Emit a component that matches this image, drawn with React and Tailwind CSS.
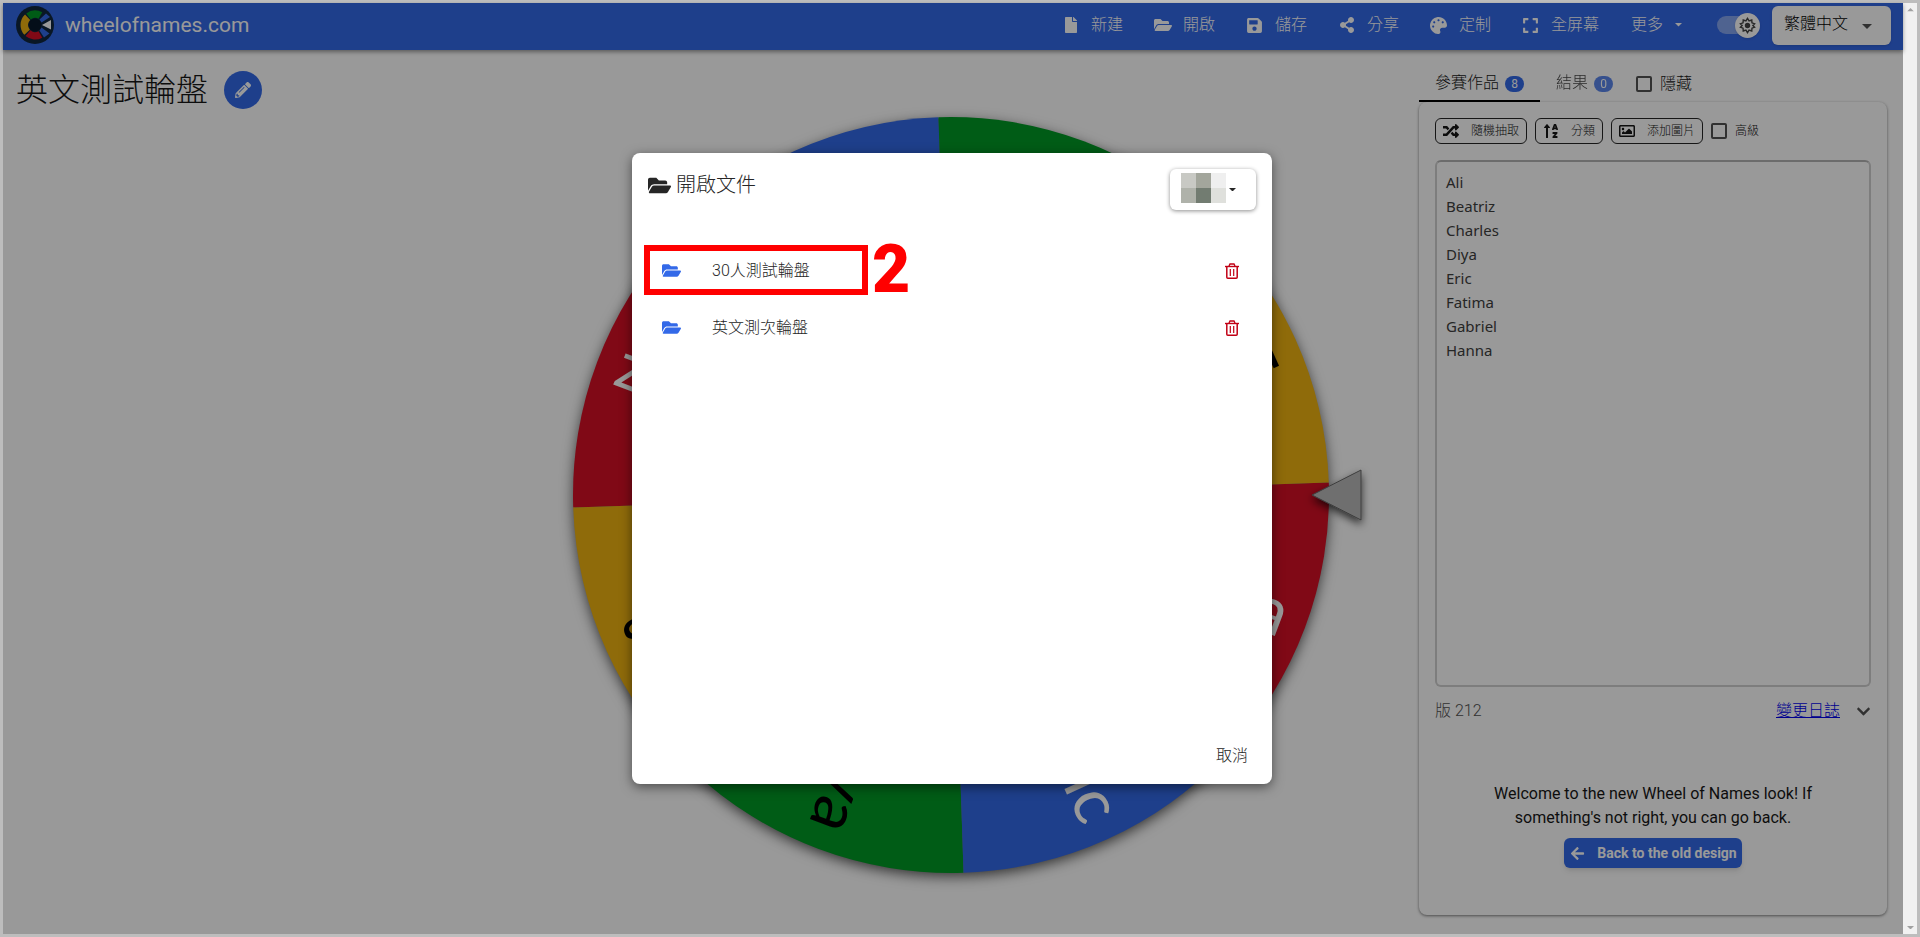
import React, { useState } from 'react';
import {
  FaFile,
  FaFolderOpen,
  FaSave,
  FaShareAlt,
  FaPalette,
  FaExpand,
  FaPencilAlt,
  FaRandom,
  FaSortAlphaUp,
  FaRegImage,
  FaArrowLeft,
  FaChevronDown,
} from 'react-icons/fa';

const NAMES = ['Ali', 'Beatriz', 'Charles', 'Diya', 'Eric', 'Fatima', 'Gabriel', 'Hanna'];

const SLICE_COLORS = [
  { fill: '#3369E8', text: '#ffffff' },
  { fill: '#D50F25', text: '#ffffff' },
  { fill: '#EEB211', text: '#000000' },
  { fill: '#009925', text: '#000000' },
];

const MENU = [
  { label: '新建', icon: <FaFile size={16} className="shrink-0" /> },
  { label: '開啟', icon: <FaFolderOpen size={18} className="shrink-0" /> },
  { label: '儲存', icon: <FaSave size={17} className="shrink-0" /> },
  { label: '分享', icon: <FaShareAlt size={16} className="shrink-0" /> },
  { label: '定制', icon: <FaPalette size={17} className="shrink-0" /> },
  { label: '全屏幕', icon: <FaExpand size={17} className="shrink-0" /> },
];

const FILES = ['30人測試輪盤', '英文測次輪盤'];

const MOSAIC = ['#c8c9c4', '#a3a69c', '#efefef', '#afb2aa', '#727c71', '#dfe0dc'];

const Caret = ({ className }) => (
  <svg viewBox="0 0 10 5" className={className} fill="currentColor" aria-hidden="true">
    <path d="M0 0h10L5 5z" />
  </svg>
);

const Logo = () => (
  <svg viewBox="-19 -19 38 38" className="w-[38px] h-[38px] shrink-0" aria-hidden="true">
    <circle r="19" fill="#10273f" />
    <g fill="none" strokeWidth="7.5">
      <path d="M-6.5-8.6A10.8 10.8 0 0 1 5.4-9.4" stroke="#009925" />
      <path d="M-7.9 7.3A10.8 10.8 0 0 1-7.4-7.8" stroke="#EEB211" />
      <path d="M5.4 9.4A10.8 10.8 0 0 1-7 8.2" stroke="#D50F25" />
    </g>
    <path d="M4.5-5.5 11-11.5l4 3.5-8.5 5.5zM4.5 5.5 9 12.5l5.500-4L6.500 2.500z" fill="#3369E8" />
    <circle r="6.4" fill="#08182a" />
    <path d="M7 0l9-5v9.500z" fill="#fff" />
  </svg>
);

const Sun = () => (
  <svg viewBox="0 0 24 24" className="w-[17px] h-[17px]" fill="none" stroke="#444" aria-hidden="true">
    <path
      d="M12 2l2.2 3.6L18 4.2l.3 4L22 9.500 19.600 12l2.400 2.500-3.700 1.300-.3 4-3.800-1.400L12 22l-2.200-3.600L6 19.800l-.3-4L2 14.500 4.400 12 2 9.500l3.700-1.300.3-4 3.800 1.400z"
      strokeWidth="2"
    />
    <circle cx="12" cy="12" r="2.6" strokeWidth="2.4" fill="#444" />
  </svg>
);

const Trash = () => (
  <svg viewBox="0 0 14 16" className="w-[14px] h-4" fill="none" stroke="#c10015" aria-hidden="true">
    <path d="M0 3.500h14" strokeWidth="1.4" />
    <path d="M4 3l1-2h4l1 2" strokeWidth="1.4" />
    <path d="M1.8 4v10.200q0 1 1 1h8.400q1 0 1-1V4" strokeWidth="1.5" />
    <path d="M5.300 6v7M8.700 6v7" strokeWidth="1.2" />
  </svg>
);

const rim = (deg, r) => {
  const a = (deg * Math.PI) / 180;
  return `${(r * Math.cos(a)).toFixed(2)} ${(r * Math.sin(a)).toFixed(2)}`;
};

const Wheel = () => {
  const step = 360 / NAMES.length;
  // Angles grow clockwise from the pointer; entries run the other way round
  const first = 245.6;

  return (
    <svg
      viewBox="-420 -400 840 800"
      className="w-[840px] max-w-full overflow-visible"
      role="img"
      aria-label="輪盤"
    >
      <defs>
        <filter id="wheelShadow" x="-20%" y="-20%" width="140%" height="140%">
          <feDropShadow dx="0" dy="4" stdDeviation="7" floodOpacity="0.7" />
        </filter>
        <filter id="pointerShadow" x="-50%" y="-50%" width="200%" height="200%">
          <feDropShadow dx="0" dy="4" stdDeviation="4" floodOpacity="0.7" />
        </filter>
      </defs>
      <circle r="377" fill="#777" filter="url(#wheelShadow)" />
      {NAMES.map((name, i) => {
        const mid = first - i * step;
        const color = SLICE_COLORS[i % SLICE_COLORS.length];
        return (
          <g key={name}>
            <path
              d={`M0 0L${rim(mid - step / 2, 378)}A378 378 0 0 1 ${rim(mid + step / 2, 378)}Z`}
              fill={color.fill}
            />
            <text
              x="357"
              y="18"
              textAnchor="end"
              transform={`rotate(${mid})`}
              fill={color.text}
              className="font-['Lato'] text-[66px]"
            >
              {name}
            </text>
          </g>
        );
      })}
      <path d="M361 0L410-25V25Z" fill="#b9b9b9" stroke="#666" filter="url(#pointerShadow)" />
    </svg>
  );
};

const Header = () => {
  const [light, setLight] = useState(true);

  return (
    <header className="h-[47px] shrink-0 bg-[#3369E8] text-white shadow-[0_2px_4px_rgba(0,0,0,0.4)] flex items-center justify-between pl-[13px] pr-3 pb-[3px]">
      <div className="flex items-center gap-[11px]">
        <Logo />
        <span className="text-[21px] leading-7">wheelofnames.com</span>
      </div>

      <nav className="flex items-center font-light">
        {MENU.map((item) => (
          <button key={item.label} type="button" className="flex items-center gap-3 px-4">
            <span className="w-4 flex justify-center">{item.icon}</span>
            {item.label}
          </button>
        ))}
        <button type="button" className="flex items-center gap-3 px-4">
          更多
          <Caret className="w-[7px]" />
        </button>

        {/* Light / dark switch */}
        <label className="relative ml-[19px] mr-3 w-[43px] h-[25px] flex items-center">
          <input
            type="checkbox"
            aria-label="主題"
            checked={light}
            onChange={(e) => setLight(e.target.checked)}
            className="appearance-none w-9 h-[18px] rounded-full bg-white/40"
          />
          <span className="absolute right-0 w-[25px] h-[25px] rounded-full bg-white shadow flex items-center justify-center">
            <Sun />
          </span>
        </label>

        <div className="relative text-black">
          <select
            aria-label="語言"
            className="appearance-none w-[119px] h-[39px] pl-3 pb-[2px] rounded-md bg-white shadow text-base"
          >
            <option>繁體中文</option>
          </select>
          <Caret className="absolute right-[19px] top-[18px] w-[10px] text-neutral-600" />
        </div>
      </nav>
    </header>
  );
};

const Badge = ({ children }) => (
  <span className="mt-[2px] w-[19px] h-4 rounded-full bg-[#3369E8] text-white text-xs font-normal leading-4 text-center">
    {children}
  </span>
);

const SmallButton = ({ icon, children }) => (
  <button
    type="button"
    className="h-[26px] px-[7px] rounded-md border border-neutral-800 flex items-center gap-3 text-xs font-light"
  >
    {icon}
    {children}
  </button>
);

const EntriesPanel = () => {
  const [entries, setEntries] = useState(NAMES.join('\n'));

  return (
    <section className="w-[468px] justify-self-end flex flex-col text-neutral-900">
      <div className="h-9 flex items-stretch font-light">
        <button type="button" className="w-[121px] border-b-2 border-black pl-4 flex items-center gap-[6px]">
          參賽作品
          <Badge>8</Badge>
        </button>
        <button type="button" className="pl-4 pb-[2px] flex items-center gap-[6px] opacity-80">
          結果
          <Badge>0</Badge>
        </button>
        <label className="ml-[23px] flex items-center gap-2">
          <input type="checkbox" className="appearance-none w-4 h-4 border-2 border-neutral-600 rounded-xs" />
          隱藏
        </label>
      </div>

      <div className="flex-1 rounded-lg bg-white shadow-[0_1px_3px_rgba(0,0,0,0.5)] px-4 pt-4 pb-[47px] flex flex-col">
        <div className="flex items-center gap-2">
          <SmallButton icon={<FaRandom size={16} />}>隨機抽取</SmallButton>
          <SmallButton icon={<FaSortAlphaUp size={16} />}>分類</SmallButton>
          <SmallButton icon={<FaRegImage size={16} />}>添加圖片</SmallButton>
          <label className="flex items-center gap-2 text-xs font-light">
            <input type="checkbox" className="appearance-none w-4 h-4 border-2 border-neutral-600 rounded-xs" />
            高級
          </label>
        </div>

        <textarea
          aria-label="參賽作品"
          value={entries}
          onChange={(e) => setEntries(e.target.value)}
          className="mt-4 flex-1 min-h-60 resize-none rounded-md border-2 border-[#d0d0d0] border-t-[#b5b5b5] px-[9px] py-2 font-['Noto_Sans'] text-[15px] leading-6 text-neutral-700"
        />

        <div className="mt-3 flex items-center leading-6 text-neutral-600">
          <span className="font-light">版 212</span>
          <a href="#changelog" className="ml-auto font-light text-[#0000ee] underline">變更日誌</a>
          <button type="button" aria-label="展開" className="ml-4">
            <FaChevronDown size={15} />
          </button>
        </div>

        <p className="mt-[59px] mx-auto w-[340px] text-center leading-6">
          Welcome to the new Wheel of Names look! If something's not right, you can go back.
        </p>
        <button
          type="button"
          className="mt-2 self-center h-[30px] pl-[6px] pr-[5px] rounded-md bg-[#3369E8] text-white text-sm font-bold shadow-md flex items-center gap-3"
        >
          <FaArrowLeft size={15} />
          Back to the old design
        </button>
      </div>
    </section>
  );
};

const OpenDialog = () => (
  <div className="absolute inset-0 pr-[2px] bg-black/40 flex items-center justify-center">
    <div
      role="dialog"
      aria-labelledby="dialogTitle"
      className="relative w-[640px] max-w-full h-[631px] max-h-full rounded-lg bg-white text-neutral-800 font-light shadow-[0_3px_12px_rgba(0,0,0,0.5)] flex flex-col"
    >
      <div className="flex items-start justify-between p-4">
        <h2 id="dialogTitle" className="flex items-center gap-[5px] text-xl leading-8 font-light">
          <FaFolderOpen size={23} />
          開啟文件
        </h2>
        <button
          type="button"
          aria-label="帳戶"
          className="w-[86px] h-[41px] pl-[11px] rounded-md bg-white shadow-[0_1px_4px_rgba(0,0,0,0.45)] flex items-center gap-[3px]"
        >
          <span className="grid grid-cols-3 pb-[3px]">
            {MOSAIC.map((color) => (
              <span key={color} className="w-[15px] h-[15px]" style={{ backgroundColor: color }}></span>
            ))}
          </span>
          <Caret className="w-[7px]" />
        </button>
      </div>

      <ul className="flex-1 mt-4">
        {FILES.map((file) => (
          <li key={file} className="h-[57px] pl-[30px] pr-[33px] flex items-center justify-between">
            <button type="button" className="flex items-center gap-[31px]">
              <FaFolderOpen size={19} color="#3369E8" />
              {file}
            </button>
            <button type="button" aria-label="刪除">
              <Trash />
            </button>
          </li>
        ))}
      </ul>

      <button type="button" className="self-end mr-6 mb-4 leading-6">取消</button>

      {/* Step marker */}
      <div className="absolute left-3 top-[92px] flex items-center gap-1 pointer-events-none">
        <span className="w-[224px] h-[50px] border-[6px] border-[#ff0000]"></span>
        <span className="font-black text-[66px] leading-[50px] text-[#ff0000]">2</span>
      </div>
    </div>
  </div>
);

const ScrollBar = () => (
  <div className="w-[14px] shrink-0 bg-[#f1f1f1] text-neutral-400 flex flex-col items-center justify-between py-[5px]">
    <Caret className="w-[7px] rotate-180" />
    <Caret className="w-[7px]" />
  </div>
);

const App = () => {
  return (
    <div className="min-h-screen flex border-3 border-[#bdbdbd] bg-white font-['Roboto','Noto_Sans_CJK_TC',sans-serif] text-base">
      <div className="relative flex-1 flex flex-col">
        <Header />
        <main className="flex-1 grid grid-cols-[1fr_auto_1fr] pl-3 pr-4 pt-4 pb-[19px]">
          <div className="w-0 pl-[1px] flex items-center gap-4 self-start mt-1">
            <h1 className="text-[32px] leading-10 font-light whitespace-nowrap text-neutral-900">英文測試輪盤</h1>
            <button
              type="button"
              aria-label="編輯"
              className="w-[38px] h-[38px] shrink-0 rounded-full bg-[#3369E8] text-white flex items-center justify-center"
            >
              <FaPencilAlt size={16} />
            </button>
          </div>
          <div className="self-center pt-2">
            <Wheel />
          </div>
          <EntriesPanel />
        </main>
        <OpenDialog />
      </div>
      <ScrollBar />
    </div>
  );
};

export default App;
